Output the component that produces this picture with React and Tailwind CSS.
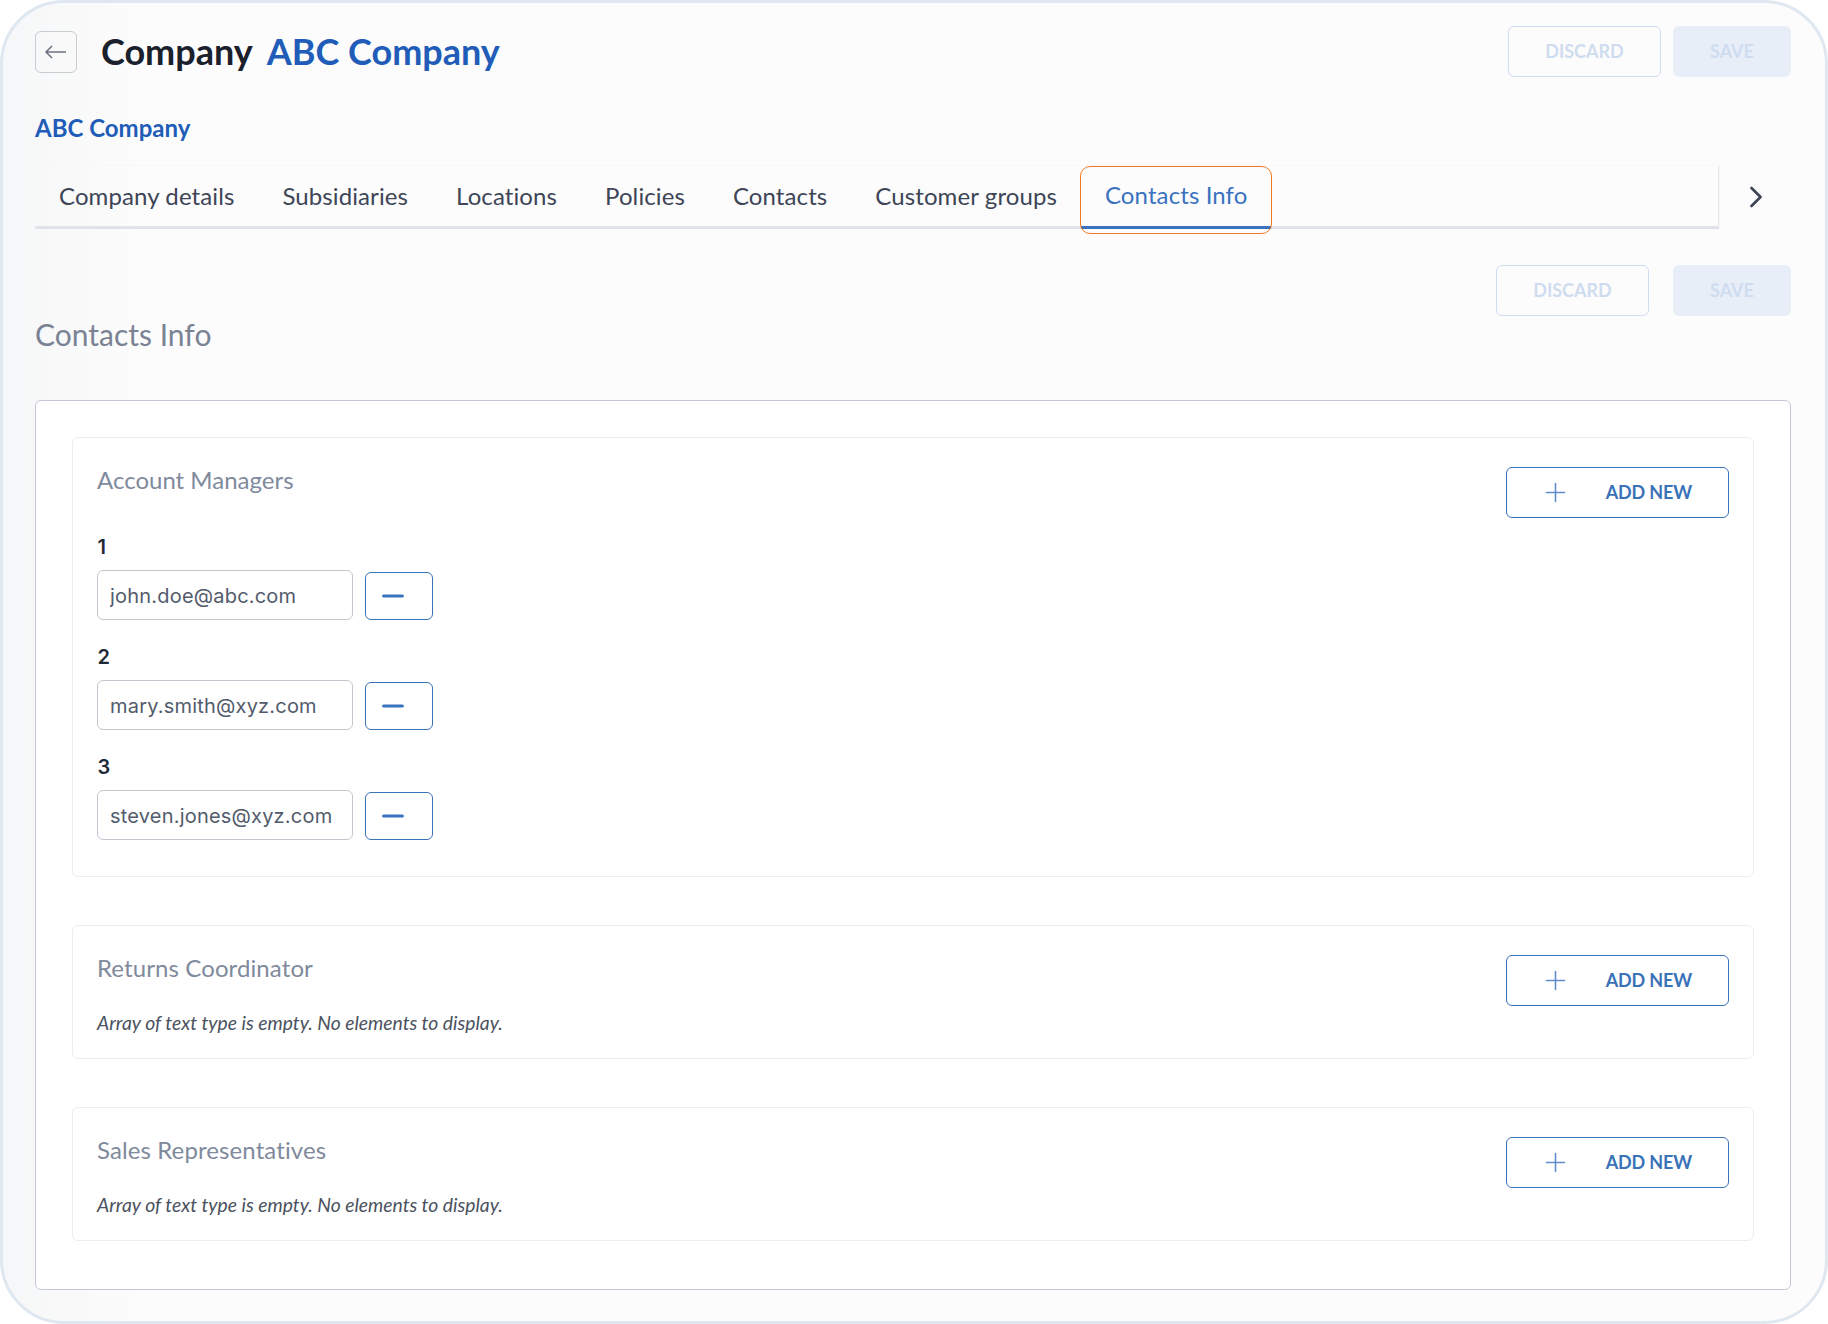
import React from 'react';
import { ChevronRight, Minus, Plus } from 'lucide-react';

const tabs = ['Company details', 'Subsidiaries', 'Locations', 'Policies', 'Contacts', 'Customer groups'];
const managers = ['john.doe@abc.com', 'mary.smith@xyz.com', 'steven.jones@xyz.com'];

const DisabledButtons = ({ gap }) => (
  <div className={`flex justify-end ${gap}`}>
    <button disabled className="h-[51px] w-[153px] rounded-md border-[1.5px] border-[#cfdcf2] text-[18px] font-bold text-[#cfdcf0]">
      DISCARD
    </button>
    <button disabled className="h-[51px] w-[118px] rounded-md bg-[#e8eef8] text-[18px] font-bold text-[#cfdcf0]">
      SAVE
    </button>
  </div>
);

const AddNew = () => (
  <button className="flex h-[51px] w-[223px] items-center justify-end gap-[35px] rounded-md border-[1.5px] border-[#3a72b8] pr-[36px] text-[18px] font-bold tracking-[-0.15px] text-[#3a72b8]">
    <Plus size={31} strokeWidth={1.2} className="text-[#5f8ccc]" />
    <span className="pb-[1px]">ADD NEW</span>
  </button>
);

const EmptySection = ({ title }) => (
  <section className="rounded-md border border-[#ebedf0] pl-[24px] pr-[24px] pt-[29px] pb-[21px]">
    <div className="flex h-[51px] items-start justify-between">
      <h3 className="text-[24px] leading-[26px] tracking-[0.1px] text-[#7f8a9c]">{title}</h3>
      <AddNew />
    </div>
    <p className="mt-[3px] text-[19.33px] italic leading-[28px] text-[#4b5260]">
      Array of text type is empty. No elements to display.
    </p>
  </section>
);

export default function App() {
  return (
    <div className="h-[1324px] w-[1828px] overflow-hidden bg-white font-[Lato,sans-serif]">
      <div className="h-full rounded-[64px] border-[3px] border-[#dfe7f0] bg-gradient-to-r from-[#f6f7f8] to-[#fcfcfc] to-[8%] pl-[32px] pr-[34px] pt-[23px]">
        {/* header */}
        <div className="flex h-[51px] items-center justify-between">
          <div className="flex items-center">
            <button className="flex h-[42px] w-[42px] items-center justify-center rounded-md border border-[#c9ccd3] pr-[2px]">
              <svg width="23" height="14" viewBox="0 0 23 14" fill="none" stroke="#6b7280" strokeWidth="1.5">
                <path d="M22 7H2M8 1 2 7l6 6" />
              </svg>
            </button>
            <h1 className="ml-[24px] pb-[2px] text-[36px] font-bold text-[#1a202c]">Company</h1>
            <span className="ml-[14px] pb-[2px] text-[36px] font-bold text-[#215cb8]">ABC Company</span>
          </div>
          <DisabledButtons gap="gap-[12px]" />
        </div>

        <h2 className="mt-[36px] text-[24px] font-bold leading-[30px] text-[#215cb8]">ABC Company</h2>

        {/* tabs */}
        <div className="mt-[23px] flex h-[63px]">
          <div className="flex w-[1683px] border-b-[3px] border-[#e0e3ea] shadow-[1px_0_1px_#e4e4e4]">
            {tabs.map((tab) => (
              <button key={tab} className="h-[60px] px-[24px] text-[24px] tracking-[0.1px] text-[#3d4557]">
                {tab}
              </button>
            ))}
            <button className="relative h-[63px] border-b-[3px] border-[#3a72c0] px-[24px] pb-[3px] text-[24px] tracking-[0.1px] text-[#3a72c0]">
              Contacts Info
              <span className="absolute -left-px -right-px top-0 -bottom-[8px] rounded-[10px] border-[1.5px] border-[#f07a20]" />
            </button>
          </div>
          <div className="flex flex-1 items-center justify-center pb-[2px] pl-[3px]">
            <ChevronRight size={36} strokeWidth={1.8} className="text-[#3d4557]" />
          </div>
        </div>

        <div className="mt-[36px]">
          <DisabledButtons gap="gap-[24px]" />
        </div>
        <h2 className="text-[30px] leading-[36px] text-[#7a8394]">Contacts Info</h2>

        {/* contacts card */}
        <div className="mt-[48px] flex flex-col gap-[48px] rounded-md border border-[#c5c8d4] bg-white pl-[36px] pr-[36px] pt-[36px] pb-[48px]">
          <section className="rounded-md border border-[#ebedf0] pl-[24px] pr-[24px] pt-[29px] pb-[36px]">
            <div className="flex h-[51px] items-start justify-between">
              <h3 className="text-[24px] leading-[26px] text-[#7f8a9c]">Account Managers</h3>
              <AddNew />
            </div>
            <div className="mt-[14px] flex flex-col gap-[22px]">
              {managers.map((email, i) => (
                <div key={email}>
                  <label className="block pl-[0.5px] pt-px font-[Inter,sans-serif] text-[20px] font-semibold leading-[28px] text-[#1f2937]">
                    {i + 1}
                  </label>
                  <div className="mt-[9px] flex items-end gap-[12px]">
                    <input
                      readOnly
                      value={email}
                      className="h-[50px] w-[256px] rounded-md border border-[#c4c7cf] bg-white px-[12px] pt-px font-[Inter,sans-serif] text-[20px] tracking-[0.2px] text-[#525b6b] outline-none"
                    />
                    <button className="flex h-[48px] w-[68px] items-center justify-start rounded-md border-[1.5px] border-[#3a72b8] pl-[10.5px] text-[#3a72c0]">
                      <Minus size={32} strokeWidth={2.4} />
                    </button>
                  </div>
                </div>
              ))}
            </div>
          </section>
          <EmptySection title="Returns Coordinator" />
          <EmptySection title="Sales Representatives" />
        </div>
      </div>
    </div>
  );
}
